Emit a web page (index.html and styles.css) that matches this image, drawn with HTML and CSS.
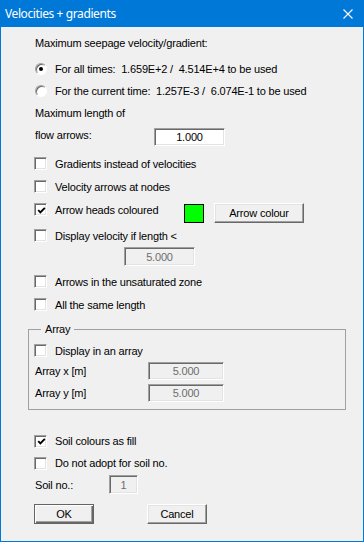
FILE: index.html
```html
<!DOCTYPE html>
<html>
<head>
<meta charset="utf-8">
<link rel="stylesheet" href="styles.css">
</head>
<body>
<div class="window">
  <div class="titlebar">
    <span class="title">Velocities + gradients</span>
    <svg class="close" width="10" height="10" viewBox="0 0 10 10"><path d="M0.5 0.5 L9.5 9.5 M9.5 0.5 L0.5 9.5" stroke="#fff" stroke-width="1.1" fill="none"/></svg>
  </div>
  <div class="content">
    <div class="row h22 txt">Maximum seepage velocity/gradient:</div>
    <div class="row h22 mt4"><span class="radio checked"></span><span class="opt pre">For all times:  1.659E+2 /  4.514E+4 to be used</span></div>
    <div class="row h22"><span class="radio"></span><span class="opt pre">For the current time:  1.257E-3 /  6.074E-1 to be used</span></div>
    <div class="row h22 txt">Maximum length of</div>
    <div class="row h22">
      <span class="txt lbl-flow">flow arrows:</span>
      <span class="field w71 h18 bottom">1.000</span>
    </div>
    <div class="row h23 mt6"><span class="check"></span><span class="opt">Gradients instead of velocities</span></div>
    <div class="row h23"><span class="check"></span><span class="opt">Velocity arrows at nodes</span></div>
    <div class="row h23">
      <span class="colour-label"><span class="check checked"><svg width="9" height="9" viewBox="0 0 9 9"><path d="M1.2 4.2 L3.4 6.4 L7.8 1.8" stroke="#000" stroke-width="1.9" fill="none"/></svg></span><span class="opt">Arrow heads coloured</span></span>
      <span class="swatch"></span>
      <span class="btn btn-colour">Arrow colour</span>
    </div>
    <div class="row h23 mt3"><span class="check"></span><span class="opt">Display velocity if length &lt;</span></div>
    <div class="row h19"><span class="field disabled w71 h19 indent90">5.000</span></div>
    <div class="row h23 mt4"><span class="check"></span><span class="opt">Arrows in the unsaturated zone</span></div>
    <div class="row h23"><span class="check"></span><span class="opt">All the same length</span></div>
    <fieldset class="group">
      <legend class="legend">Array</legend>
      <div class="row h23 mt3"><span class="check"></span><span class="opt">Display in an array</span></div>
      <div class="row h18"><span class="txt lbl-array">Array x [m]</span><span class="field disabled w76 h18">5.000</span></div>
      <div class="row h18 mt4"><span class="txt lbl-array">Array y [m]</span><span class="field disabled w76 h18">5.000</span></div>
    </fieldset>
    <div class="row h22 mt20"><span class="check checked"><svg width="9" height="9" viewBox="0 0 9 9"><path d="M1.2 4.2 L3.4 6.4 L7.8 1.8" stroke="#000" stroke-width="1.9" fill="none"/></svg></span><span class="opt">Soil colours as fill</span></div>
    <div class="row h22"><span class="check"></span><span class="opt">Do not adopt for soil no.</span></div>
    <div class="row h19 mt1"><span class="txt lbl-soil">Soil no.:</span><span class="field disabled w29 h19">1</span></div>
    <div class="row buttons">
      <span class="btn btn-default">OK</span>
      <span class="btn btn-cancel">Cancel</span>
    </div>
  </div>
</div>
</body>
</html>
```

FILE: styles.css
```css
html, body {
  margin: 0;
  padding: 0;
  background: #f0f0f0;
}

.window {
  width: 364px;
  height: 542px;
  box-sizing: border-box;
  border: 1px solid #0078d7;
  border-top: none;
  background: #f0f0f0;
  font-family: "Liberation Sans", Arial, sans-serif;
  font-size: 11px;
  letter-spacing: -0.18px;
  color: #000;
}

.titlebar {
  height: 27px;
  background: #0078d7;
  display: flex;
  align-items: center;
  padding-left: 4px;
  padding-right: 9px;
}

.title {
  flex: 1;
  color: #fff;
  font-family: "Noto Sans", "Open Sans", sans-serif;
  font-size: 12px;
  letter-spacing: -0.4px;
  padding-bottom: 1px;
}

.close {
  display: block;
  margin-top: 1px;
  margin-right: 1px;
}

.content {
  padding: 5px 0 0 33px;
  display: flex;
  flex-direction: column;
}

.row {
  display: flex;
  align-items: center;
  flex: none;
}

.h18 { height: 18px; }
.h19 { height: 19px; }
.h22 { height: 22px; }
.h23 { height: 23px; }

.mt1 { margin-top: 1px; }
.mt3 { margin-top: 3px; }
.mt4 { margin-top: 4px; }
.mt6 { margin-top: 6px; }
.mt20 { margin-top: 20px; }

.txt {
  padding-left: 1px;
}

.pre {
  white-space: pre;
}

.opt {
  margin-left: 8px;
}

.radio {
  width: 12px;
  height: 12px;
  box-sizing: border-box;
  border-radius: 50%;
  border: 1px solid;
  border-color: #a0a0a0 #ffffff #ffffff #a0a0a0;
  box-shadow: inset 1px 1px 0 #696969;
  background: #fff;
  margin-left: 1px;
  position: relative;
}

.radio.checked::after {
  content: "";
  position: absolute;
  left: 3px;
  top: 3px;
  width: 4px;
  height: 4px;
  border-radius: 50%;
  background: #000;
}

.check {
  width: 13px;
  height: 13px;
  box-sizing: border-box;
  border: 1px solid;
  border-color: #a0a0a0 #ffffff #ffffff #a0a0a0;
  box-shadow: inset 1px 1px 0 #696969, inset -1px -1px 0 #e3e3e3;
  background: #fff;
  display: flex;
  align-items: center;
  justify-content: center;
  flex: none;
}

.check svg {
  display: block;
  margin: 1px 0 0 1px;
}

.field {
  box-sizing: border-box;
  border: 1px solid;
  border-color: #a0a0a0 #ffffff #ffffff #a0a0a0;
  box-shadow: inset 1px 1px 0 #696969, inset -1px -1px 0 #e3e3e3;
  background: #fff;
  display: flex;
  align-items: center;
  justify-content: center;
  flex: none;
}

.field.disabled {
  background: #f0f0f0;
  color: #6d6d6d;
}

.bottom { align-self: flex-end; }

.w29 { width: 29px; }
.w71 { width: 71px; }
.w76 { width: 76px; }

.indent90 { margin-left: 90px; }

.lbl-flow { width: 119px; }
.lbl-array { width: 113px; }
.lbl-soil { width: 74px; }

.colour-label {
  display: flex;
  align-items: center;
  width: 150px;
  align-self: center;
}

.swatch {
  width: 20px;
  height: 19px;
  box-sizing: border-box;
  border: 1px solid #000;
  background: #00ff00;
  align-self: flex-start;
  margin-top: 6px;
}

.btn {
  box-sizing: border-box;
  height: 20px;
  display: flex;
  align-items: center;
  justify-content: center;
  background: #f0f0f0;
  border: 1px solid;
  border-color: #ffffff #696969 #696969 #ffffff;
  box-shadow: inset -1px -1px 0 #a0a0a0, inset 1px 1px 0 #e3e3e3;
  flex: none;
}

.btn-colour {
  width: 90px;
  margin-left: 10px;
  align-self: flex-start;
  margin-top: 5px;
}

.group {
  margin: 6px 0 0 -6px;
  width: 318px;
  box-sizing: border-box;
  border: 1px solid #a0a0a0;
  padding: 0 0 7px 5px;
  display: flex;
  flex-direction: column;
}

.legend {
  padding: 0 4px;
  margin-left: 7px;
  line-height: 14px;
}

.buttons {
  margin-top: 10px;
}

.btn-default {
  width: 60px;
  border-color: #646464;
  box-shadow: inset 1px 1px 0 #ffffff, inset -1px -1px 0 #696969, inset -2px -2px 0 #a0a0a0;
}

.btn-cancel {
  width: 60px;
  margin-left: 53px;
}
```
